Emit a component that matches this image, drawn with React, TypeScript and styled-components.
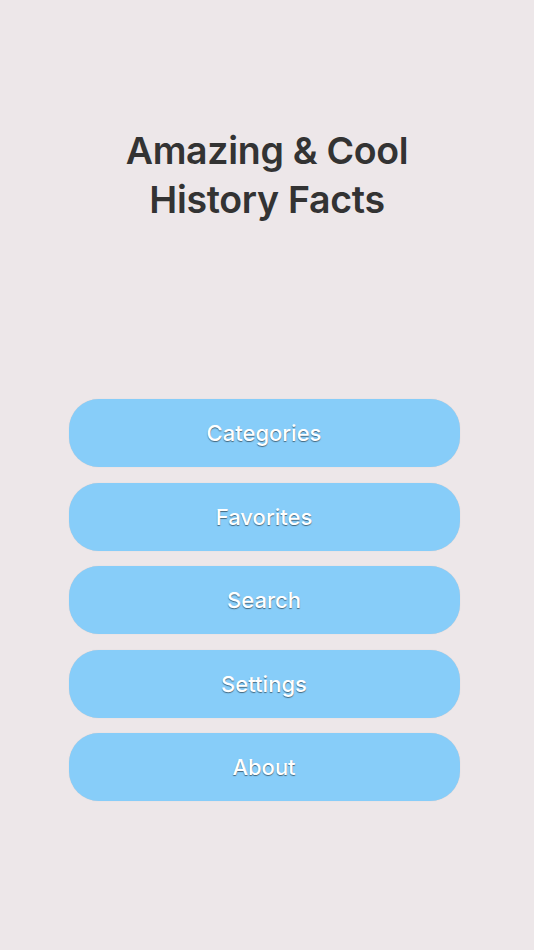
import React from "react";
import styled, { createGlobalStyle } from "styled-components";

const Global = createGlobalStyle`
  html, body { margin: 0; padding: 0; background: #ede7e9; }
  body { font-family: Inter, "Noto Sans", sans-serif; }
`;

const Screen = styled.div`
  width: 534px;
  height: 950px;
  background: #ede7e9;
  display: flex;
  flex-direction: column;
  align-items: center;
  box-sizing: border-box;
  padding-top: 126px;
`;

const Title = styled.h1`
  margin: 0;
  font-family: Inter, "Noto Sans", sans-serif;
  font-size: 37.5px;
  line-height: 49px;
  font-weight: 600;
  color: #333333;
  text-align: center;
  letter-spacing: -0.3px;
`;

const Menu = styled.nav`
  margin-top: 175px;
  margin-right: 6px;
  display: flex;
  flex-direction: column;
  gap: 15.5px;
  width: 391px;
`;

const MenuButton = styled.button`
  height: 68px;
  border: none;
  border-radius: 30px;
  background: #87cdf9;
  color: #ffffff;
  font-family: Inter, "Noto Sans", sans-serif;
  font-size: 22px;
  font-weight: 500;
  text-shadow: 0 1px 1px rgba(0, 0, 0, 0.5);
  box-shadow: 0 0 1px rgba(0, 0, 0, 0.15);
  cursor: pointer;
  padding: 0;
`;

const items = ["Categories", "Favorites", "Search", "Settings", "About"];

export default function App() {
  return (
    <>
      <Global />
      <Screen>
        <Title>
          Amazing &amp; Cool
          <br />
          History Facts
        </Title>
        <Menu>
          {items.map((label) => (
            <MenuButton key={label}>{label}</MenuButton>
          ))}
        </Menu>
      </Screen>
    </>
  );
}
